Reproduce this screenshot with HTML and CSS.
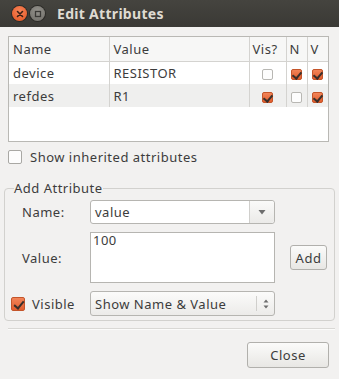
FILE: index.html
```
<!DOCTYPE html>
<html lang="en">
<head>
    <meta charset="UTF-8">
    <title>Edit Attributes</title>
    <link rel="stylesheet" href="styles.css">
</head>
<body>
    <div class="janela">
        <div class="barra-titulo">
            <span class="btn-janela fechar">
                <svg width="14" height="14" viewBox="0 0 14 14"><path d="M4.5 4.5 L9.5 9.5 M9.5 4.5 L4.5 9.5" stroke="#3b2016" stroke-width="1.6" stroke-linecap="round"/></svg>
            </span>
            <span class="btn-janela minimizar">
                <svg width="14" height="14" viewBox="0 0 14 14"><rect x="4.5" y="4.5" width="5" height="5" fill="none" stroke="#3a3936" stroke-width="1.3"/></svg>
            </span>
            <span class="titulo">Edit Attributes</span>
        </div>

        <div class="conteudo">
            <div class="tabela-box">
                <table class="tabela">
                    <thead>
                        <tr>
                            <th class="col-nome">Name</th>
                            <th class="col-valor">Value</th>
                            <th class="col-vis">Vis?</th>
                            <th class="col-n">N</th>
                            <th class="col-v">V</th>
                        </tr>
                    </thead>
                    <tbody>
                        <tr>
                            <td>device</td>
                            <td>RESISTOR</td>
                            <td class="centro"><span class="caixa"></span></td>
                            <td class="centro"><span class="caixa marcada"></span></td>
                            <td class="centro"><span class="caixa marcada"></span></td>
                        </tr>
                        <tr class="linha-par">
                            <td>refdes</td>
                            <td>R1</td>
                            <td class="centro"><span class="caixa marcada"></span></td>
                            <td class="centro"><span class="caixa"></span></td>
                            <td class="centro"><span class="caixa marcada"></span></td>
                        </tr>
                    </tbody>
                </table>
            </div>

            <label class="linha-check herdados">
                <span class="caixa grande"></span>
                <span>Show inherited attributes</span>
            </label>

            <fieldset class="grupo">
                <legend>Add Attribute</legend>
                <div class="grade">
                    <span class="rotulo">Name:</span>
                    <div class="combo">
                        <span class="combo-texto">value</span>
                        <span class="combo-seta">
                            <svg width="10" height="8" viewBox="0 0 10 8"><path d="M1.5 2 L8.5 2 L5 6.5 Z" fill="#6d6d6d"/></svg>
                        </span>
                    </div>
                    <span></span>

                    <span class="rotulo">Value:</span>
                    <div class="area-texto">100</div>
                    <button class="botao pequeno">Add</button>

                    <label class="linha-check visivel">
                        <span class="caixa grande marcada"></span>
                        <span>Visible</span>
                    </label>
                    <div class="seletor">
                        <span class="combo-texto">Show Name &amp; Value</span>
                        <span class="seletor-setas">
                            <svg width="8" height="12" viewBox="0 0 8 12"><path d="M1.5 4.5 L4 1.5 L6.5 4.5 Z M1.5 7.5 L4 10.5 L6.5 7.5 Z" fill="#6d6d6d"/></svg>
                        </span>
                    </div>
                    <span></span>
                </div>
            </fieldset>

            <div class="separador"></div>

            <div class="rodape">
                <button class="botao fechar-btn">Close</button>
            </div>
        </div>
    </div>
</body>
</html>
```

FILE: styles.css
```
* {
    margin: 0;
    padding: 0;
    box-sizing: border-box;
}

body {
    font-family: "Noto Sans", "Open Sans", sans-serif;
    font-size: 13px;
    letter-spacing: 0.5px;
    color: #3c3c3c;
    background: #f2f1f0;
    width: 339px;
    height: 379px;
    overflow: hidden;
}

.barra-titulo {
    height: 27px;
    background: linear-gradient(#45443f, #3a3935);
    display: flex;
    align-items: center;
    padding-left: 12px;
}

.btn-janela {
    width: 15px;
    height: 15px;
    border-radius: 50%;
    display: flex;
    align-items: center;
    justify-content: center;
    margin-right: 3px;
}

.fechar {
    background: radial-gradient(circle at 50% 35%, #f7855a, #e4531f);
    box-shadow: 0 0 0 1px #2c2b28;
}

.minimizar {
    background: radial-gradient(circle at 50% 35%, #94928c, #6e6c67);
    box-shadow: 0 0 0 1px #2c2b28;
}

.titulo {
    color: #dfdbd2;
    font-weight: bold;
    font-size: 14px;
    margin-left: 9px;
    letter-spacing: 0.3px;
}

.conteudo {
    padding: 9px 4px 0;
}

.tabela-box {
    margin: 0 6px 0 4px;
    height: 106px;
    background: white;
    border: 1px solid #b9b8b4;
}

.tabela {
    border-collapse: collapse;
    width: 100%;
    table-layout: fixed;
}

.tabela th {
    font-weight: normal;
    text-align: left;
    height: 24px;
    padding-left: 4px;
    border-bottom: 1px solid #d4d3d0;
    border-right: 1px solid #d4d3d0;
    background: #f7f7f6;
}

.tabela th:last-child {
    border-right: none;
}

.tabela td {
    height: 23px;
    padding-left: 4px;
    border-right: 1px solid #d4d3d0;
}

.tabela td:last-child {
    border-right: none;
}

.col-nome { width: 100px; }
.col-valor { width: 140px; }
.col-vis { width: 37px; }
.col-n { width: 21px; }

.tabela .col-vis,
.tabela .col-n,
.tabela .col-v {
    padding-left: 3px;
}

.linha-par td {
    background: #efefee;
}

.tabela td.centro {
    text-align: center;
    padding-left: 0;
}

.caixa {
    display: inline-block;
    width: 11px;
    height: 11px;
    border: 1px solid #b8b7b3;
    border-radius: 2px;
    background: #fdfdfd;
    vertical-align: middle;
    position: relative;
}

.caixa.grande {
    width: 14px;
    height: 14px;
    border-color: #a9a8a4;
}

.caixa.marcada {
    background: linear-gradient(#f28458, #e35d2d);
    border-color: #c4552a;
}

.caixa.marcada::after {
    content: "";
    position: absolute;
    left: 2px;
    top: 0px;
    width: 4px;
    height: 7px;
    border-right: 2px solid #3a302b;
    border-bottom: 2px solid #3a302b;
    transform: rotate(40deg);
}

.caixa.grande.marcada::after {
    left: 4px;
    top: 1px;
    height: 8px;
}

.linha-check {
    display: flex;
    align-items: center;
    gap: 8px;
}

.herdados {
    margin: 8px 0 0 4px;
    height: 14px;
}

.grupo {
    margin-top: 15px;
    border: 1px solid #d2d1ce;
    border-radius: 4px;
    padding: 3px 6px 4px 6px;
}

.grupo legend {
    padding: 0;
    margin-left: 3px;
    font-size: 13px;
    line-height: 18px;
}

.grade {
    display: grid;
    grid-template-columns: 79px 185px 52px;
    grid-template-rows: 24px 51px 25px;
    row-gap: 8px;
    align-items: center;
}

.rotulo {
    padding-left: 11px;
}

.combo, .seletor {
    height: 100%;
    display: flex;
    align-items: center;
    border: 1px solid #b6b5b1;
    border-radius: 3px;
    background: white;
}

.seletor {
    background: linear-gradient(#fbfbfa, #ecebe9);
}

.combo-texto {
    flex: 1;
    padding-left: 4px;
}

.combo-seta {
    width: 25px;
    height: 100%;
    border-left: 1px solid #d0cfcc;
    display: flex;
    align-items: center;
    justify-content: center;
    background: linear-gradient(#fafaf9, #ebeae8);
    border-radius: 0 3px 3px 0;
}

.seletor-setas {
    width: 18px;
    height: 15px;
    border-left: 1px solid #d0cfcc;
    display: flex;
    align-items: center;
    justify-content: center;
}

.area-texto {
    height: 100%;
    border: 1px solid #b6b5b1;
    background: white;
    padding: 0 2px;
    line-height: 15px;
}

.botao {
    font-family: inherit;
    font-size: 13px;
    letter-spacing: 0.5px;
    color: #3c3c3c;
    border: 1px solid #b1b0ac;
    border-radius: 3px;
    background: linear-gradient(#fbfbfa, #e8e7e4);
}

.pequeno {
    height: 25px;
    width: 37px;
    padding: 0;
    justify-self: end;
}

.visivel {
    gap: 7px;
}

.separador {
    margin: 7px 0 0 4px;
    border-top: 1px solid #d9d8d5;
    border-bottom: 1px solid #fbfbfa;
}

.rodape {
    display: flex;
    justify-content: flex-end;
    padding: 12px 6px 0 0;
}

.fechar-btn {
    width: 82px;
    height: 26px;
}
```
